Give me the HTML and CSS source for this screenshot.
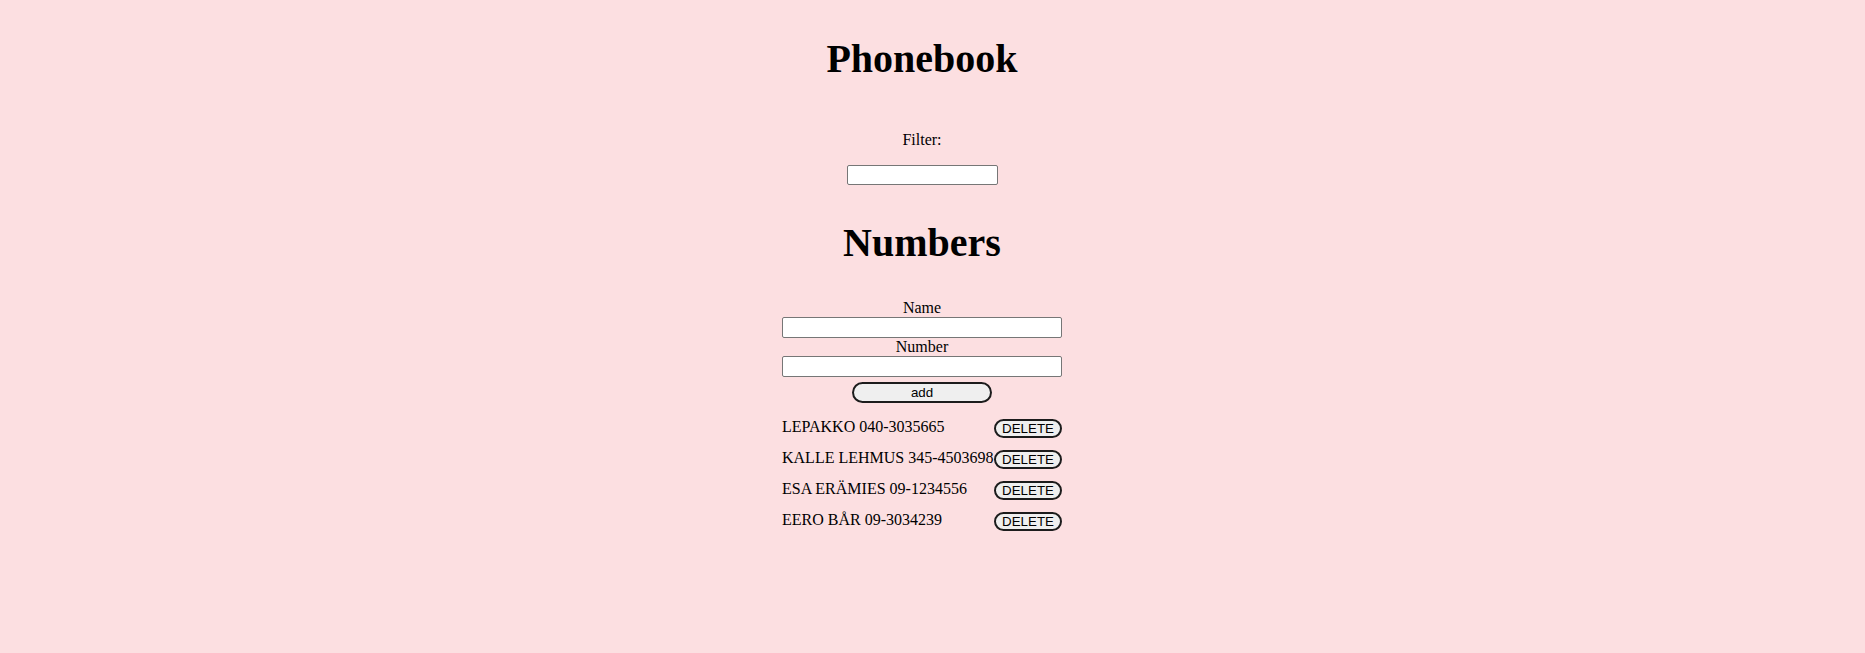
FILE: index.html
```html
<!DOCTYPE html>
<html lang="en">
<head>
<meta charset="utf-8">
<title>Phonebook</title>
<link rel="stylesheet" href="styles.css">
</head>
<body>
<div class="app">
  <h1 class="title title-main">Phonebook</h1>
  <div class="filter">
    <label class="label filter-label" for="filter">Filter:</label>
    <input class="field filter-input" id="filter" type="text">
  </div>
  <h2 class="title title-section">Numbers</h2>
  <form class="entry-form">
    <label class="label" for="name">Name</label>
    <input class="field wide" id="name" type="text">
    <label class="label" for="number">Number</label>
    <input class="field wide" id="number" type="text">
    <button class="btn add" type="button">add</button>
  </form>
  <ul class="people">
    <li class="person"><span class="person-text">LEPAKKO 040-3035665</span><button class="btn delete" type="button">DELETE</button></li>
    <li class="person"><span class="person-text">KALLE LEHMUS 345-4503698</span><button class="btn delete" type="button">DELETE</button></li>
    <li class="person"><span class="person-text">ESA ERÄMIES 09-1234556</span><button class="btn delete" type="button">DELETE</button></li>
    <li class="person"><span class="person-text">EERO BÅR 09-3034239</span><button class="btn delete" type="button">DELETE</button></li>
  </ul>
</div>
</body>
</html>
```

FILE: styles.css
```css
html, body {
  background: #fcdfe1;
}
body {
  margin: 0;
  padding: 8px 21px 8px 0;
  font-family: "Liberation Serif", "Times New Roman", serif;
  font-size: 16px;
  color: #000;
}
.app {
  display: flex;
  flex-direction: column;
  align-items: center;
}
.title {
  margin: 0;
  font-size: 40px;
  line-height: 46px;
  font-weight: bold;
}
.title-main {
  margin-top: 28px;
}
.title-section {
  margin-top: 35px;
}
.filter {
  display: flex;
  flex-direction: column;
  align-items: center;
  margin-top: 49px;
}
.label {
  display: block;
  line-height: 18px;
  text-align: center;
}
.field {
  box-sizing: border-box;
  margin: 0;
  border: 1px solid #767676;
  border-radius: 2px;
  background: #fff;
  font-family: "Liberation Sans", Arial, sans-serif;
  font-size: 13.33px;
  padding: 1px 2px;
}
.filter-input {
  width: 151px;
  height: 20px;
  margin-top: 16px;
}
.entry-form {
  display: flex;
  flex-direction: column;
  align-items: center;
  width: 280px;
  margin-top: 33px;
}
.wide {
  width: 280px;
  height: 21px;
}
.btn {
  box-sizing: border-box;
  margin: 0;
  border: 2px solid #1c1c1c;
  border-radius: 11px;
  background: #efefef;
  color: #000;
  font-family: "Liberation Sans", Arial, sans-serif;
  font-size: 13.33px;
  padding: 1px 6px;
}
.add {
  width: 140px;
  height: 21px;
  line-height: 15px;
  margin-top: 5px;
}
.people {
  list-style: none;
  margin: 15px 0 0;
  padding: 0;
  width: 280px;
}
.person {
  display: flex;
  justify-content: space-between;
  align-items: flex-start;
  height: 31px;
  line-height: 18px;
}
.person-text {
  white-space: nowrap;
}
.delete {
  width: 68px;
  height: 19px;
  line-height: 13px;
  margin-top: 1px;
  flex: none;
}
```
